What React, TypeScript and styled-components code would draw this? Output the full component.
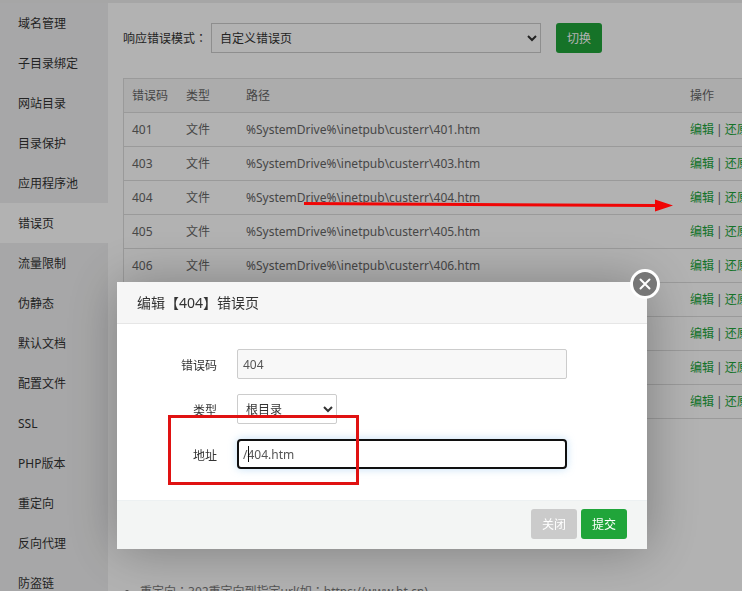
import React from "react";
import styled, { createGlobalStyle } from "styled-components";

const GlobalStyle = createGlobalStyle`
  *, *::before, *::after { box-sizing: border-box; }
  body {
    margin: 0;
    background: #fff;
    color: #333;
    font: 12px/18px "Noto Sans", "Noto Sans CJK SC", sans-serif;
  }
  button, input, select { font: inherit; color: inherit; margin: 0; }
`;

const Page = styled.div`
  display: flex;
  height: 100vh;
  overflow: hidden;
  border-top: 3px solid #eee;
`;

const Sidebar = styled.nav`
  flex: 0 0 108px;
  background: #f0f0f1;
`;

const SideLink = styled.a<{ $active?: boolean }>`
  display: block;
  height: 40px;
  padding-left: 18px;
  line-height: 42px;
  color: #333;
  text-decoration: none;
  background: ${(p) => (p.$active ? "#fff" : "transparent")};
`;

const Main = styled.main`
  flex: 1;
  min-width: 0;
  overflow: hidden;
  padding: 20px 0 0 15px;
`;

const Toolbar = styled.div`
  display: flex;
  align-items: center;
  margin-bottom: 25px;
`;

const ToolbarLabel = styled.label`
  margin-right: 4px;
  padding-top: 2px;
  white-space: nowrap;
`;

const CenteredColon = styled.span`
  font-family: "Noto Sans CJK TC", sans-serif;
  line-height: 1;
`;

const Select = styled.select<{ $wide?: boolean }>`
  width: ${(p) => (p.$wide ? "330px" : "100px")};
  height: 30px;
  padding: 0 4px;
  background: #fff;
  border: 1px solid #ccc;
  border-radius: ${(p) => (p.$wide ? "0" : "2px")};
`;

const Button = styled.button<{ $muted?: boolean }>`
  width: 46px;
  height: 30px;
  padding: 2px 0 0;
  border: 0;
  border-radius: 3px;
  color: #fff;
  background: ${(p) => (p.$muted ? "#cbcbcb" : "#20a53a")};
`;

const SwitchButton = styled(Button)`
  margin-left: 15px;
`;

const Table = styled.table`
  width: calc(100% + 20px);
  table-layout: fixed;
  border-collapse: separate;
  border-spacing: 0;
  border: 1px solid #ddd;
  border-bottom: 0;
  color: #666;
`;

const Th = styled.th<{ $width?: number }>`
  width: ${(p) => (p.$width ? `${p.$width}px` : "auto")};
  height: 34px;
  padding: 0 8px;
  text-align: left;
  font-weight: 400;
  white-space: nowrap;
  background: #f6f6f6;
  border-bottom: 1px solid #ddd;
`;

const Td = styled.td`
  height: 34px;
  padding: 0 8px;
  white-space: nowrap;
  border-bottom: 1px solid #ddd;
`;

const Actions = styled.div`
  display: flex;
  gap: 2px;
`;

const ActionLink = styled.a`
  color: #20a53a;
  text-decoration: none;
`;

const Tips = styled.ul`
  margin: 164px 0 0;
  padding-left: 17px;
  color: #777;
`;

const Overlay = styled.div`
  position: fixed;
  inset: 0;
  display: flex;
  justify-content: center;
  align-items: flex-start;
  padding: 282px 0 0 22px;
  background: rgba(0, 0, 0, 0.3);
`;

const Dialog = styled.section`
  position: relative;
  flex: 0 1 530px;
  background: #fff;
  box-shadow: 1px 1px 50px rgba(0, 0, 0, 0.3);
`;

const DialogTitle = styled.h2`
  margin: 0;
  padding: 0 20px;
  font-size: 14px;
  font-weight: 400;
  line-height: 41px;
  background: #f6f6f6;
  border-bottom: 1px solid #e6e6e6;
`;

const CloseButton = styled.button`
  position: absolute;
  top: -13px;
  right: -13px;
  display: flex;
  align-items: center;
  justify-content: center;
  width: 30px;
  height: 30px;
  padding: 0;
  color: #fff;
  background: #777;
  border: 3px solid #fff;
  border-radius: 50%;
`;

const Form = styled.form`
  display: flex;
  flex-direction: column;
  gap: 15px;
  padding: 25px 0 31px;
`;

const Field = styled.div`
  display: flex;
  align-items: center;
`;

const FieldLabel = styled.label`
  width: 100px;
  margin-right: 20px;
  padding-top: 4px;
  text-align: right;
`;

const InputWrap = styled.div`
  position: relative;
  display: flex;
  flex: 0 1 330px;
`;

const TextInput = styled.input<{ $focused?: boolean }>`
  width: 100%;
  height: 30px;
  padding: ${(p) => (p.$focused ? "0 4px" : "0 5px")};
  color: #555;
  background: ${(p) => (p.$focused ? "#fff" : "#f8f8f8")};
  border: ${(p) => (p.$focused ? "2px solid #101010" : "1px solid #ccc")};
  border-radius: ${(p) => (p.$focused ? "4px" : "2px")};
  box-shadow: ${(p) => (p.$focused ? "0 0 8px rgba(102, 175, 233, 0.4)" : "none")};
  outline: 0;
`;

const Caret = styled.span`
  position: absolute;
  left: 11px;
  top: 7px;
  width: 1px;
  height: 16px;
  background: #111;
`;

const Footer = styled.footer`
  display: flex;
  justify-content: flex-end;
  gap: 4px;
  padding: 8px 20px 10px;
  background: #f3f5f4;
  border-top: 1px solid #edf1f2;
`;

const Highlight = styled.div`
  position: absolute;
  left: 51px;
  top: 133px;
  width: 191px;
  height: 70px;
  border: 3px solid #e01212;
  pointer-events: none;
`;

const Arrow = styled.svg`
  position: absolute;
  left: 186px;
  top: -83px;
  pointer-events: none;
`;

const sections = [
  "域名管理", "子目录绑定", "网站目录", "目录保护", "应用程序池", "错误页", "流量限制", "伪静态",
  "默认文档", "配置文件", "SSL", "PHP版本", "重定向", "反向代理", "防盗链",
];

const codes = [401, 403, 404, 405, 406, 412, 500, 501, 502];

export default function App() {
  return (
    <>
      <GlobalStyle />
      <Page>
        <Sidebar>
          {sections.map((name) => (
            <SideLink key={name} href="#" $active={name === "错误页"}>{name}</SideLink>
          ))}
        </Sidebar>
        <Main>
          <Toolbar>
            <ToolbarLabel htmlFor="mode">响应错误模式<CenteredColon>：</CenteredColon></ToolbarLabel>
            <Select id="mode" $wide>
              <option>自定义错误页</option>
            </Select>
            <SwitchButton type="button">切换</SwitchButton>
          </Toolbar>
          <Table>
            <thead>
              <tr>
                <Th $width={54}>错误码</Th>
                <Th $width={60}>类型</Th>
                <Th>路径</Th>
                <Th $width={79}>操作</Th>
              </tr>
            </thead>
            <tbody>
              {codes.map((code) => (
                <tr key={code}>
                  <Td>{code}</Td>
                  <Td>文件</Td>
                  <Td>{`%SystemDrive%\\inetpub\\custerr\\${code}.htm`}</Td>
                  <Td>
                    <Actions>
                      <ActionLink href="#">编辑</ActionLink>
                      <span>|</span>
                      <ActionLink href="#">还原</ActionLink>
                    </Actions>
                  </Td>
                </tr>
              ))}
            </tbody>
          </Table>
          <Tips>
            <li>
              重定向<CenteredColon>：</CenteredColon>302重定向到指定url(如<CenteredColon>：</CenteredColon>https://www.bt.cn)
            </li>
          </Tips>
        </Main>
      </Page>
      <Overlay>
        <Dialog role="dialog" aria-labelledby="dialog-title">
          <DialogTitle id="dialog-title">编辑【404】错误页</DialogTitle>
          <CloseButton type="button" aria-label="关闭">
            <svg width="12" height="12" viewBox="0 0 12 12" fill="none" stroke="currentColor" strokeWidth="2" strokeLinecap="round">
              <path d="M1.5 1.5l9 9M10.5 1.5l-9 9" />
            </svg>
          </CloseButton>
          <Form id="error-form">
            <Field>
              <FieldLabel htmlFor="code">错误码</FieldLabel>
              <InputWrap>
                <TextInput id="code" defaultValue="404" readOnly />
              </InputWrap>
            </Field>
            <Field>
              <FieldLabel htmlFor="kind">类型</FieldLabel>
              <Select id="kind">
                <option>根目录</option>
              </Select>
            </Field>
            <Field>
              <FieldLabel htmlFor="address">地址</FieldLabel>
              <InputWrap>
                <TextInput id="address" defaultValue="/404.htm" $focused />
                <Caret />
              </InputWrap>
            </Field>
          </Form>
          <Footer>
            <Button type="button" $muted>关闭</Button>
            <Button type="submit" form="error-form">提交</Button>
          </Footer>
          <Highlight />
          <Arrow width="371" height="14" viewBox="0 0 371 14" aria-hidden="true">
            <path d="M1 4.5L353 6.5" stroke="#f00505" strokeWidth="3" />
            <path d="M352 .5L370 6.5L352 12.5z" fill="#f00505" />
          </Arrow>
        </Dialog>
      </Overlay>
    </>
  );
}
